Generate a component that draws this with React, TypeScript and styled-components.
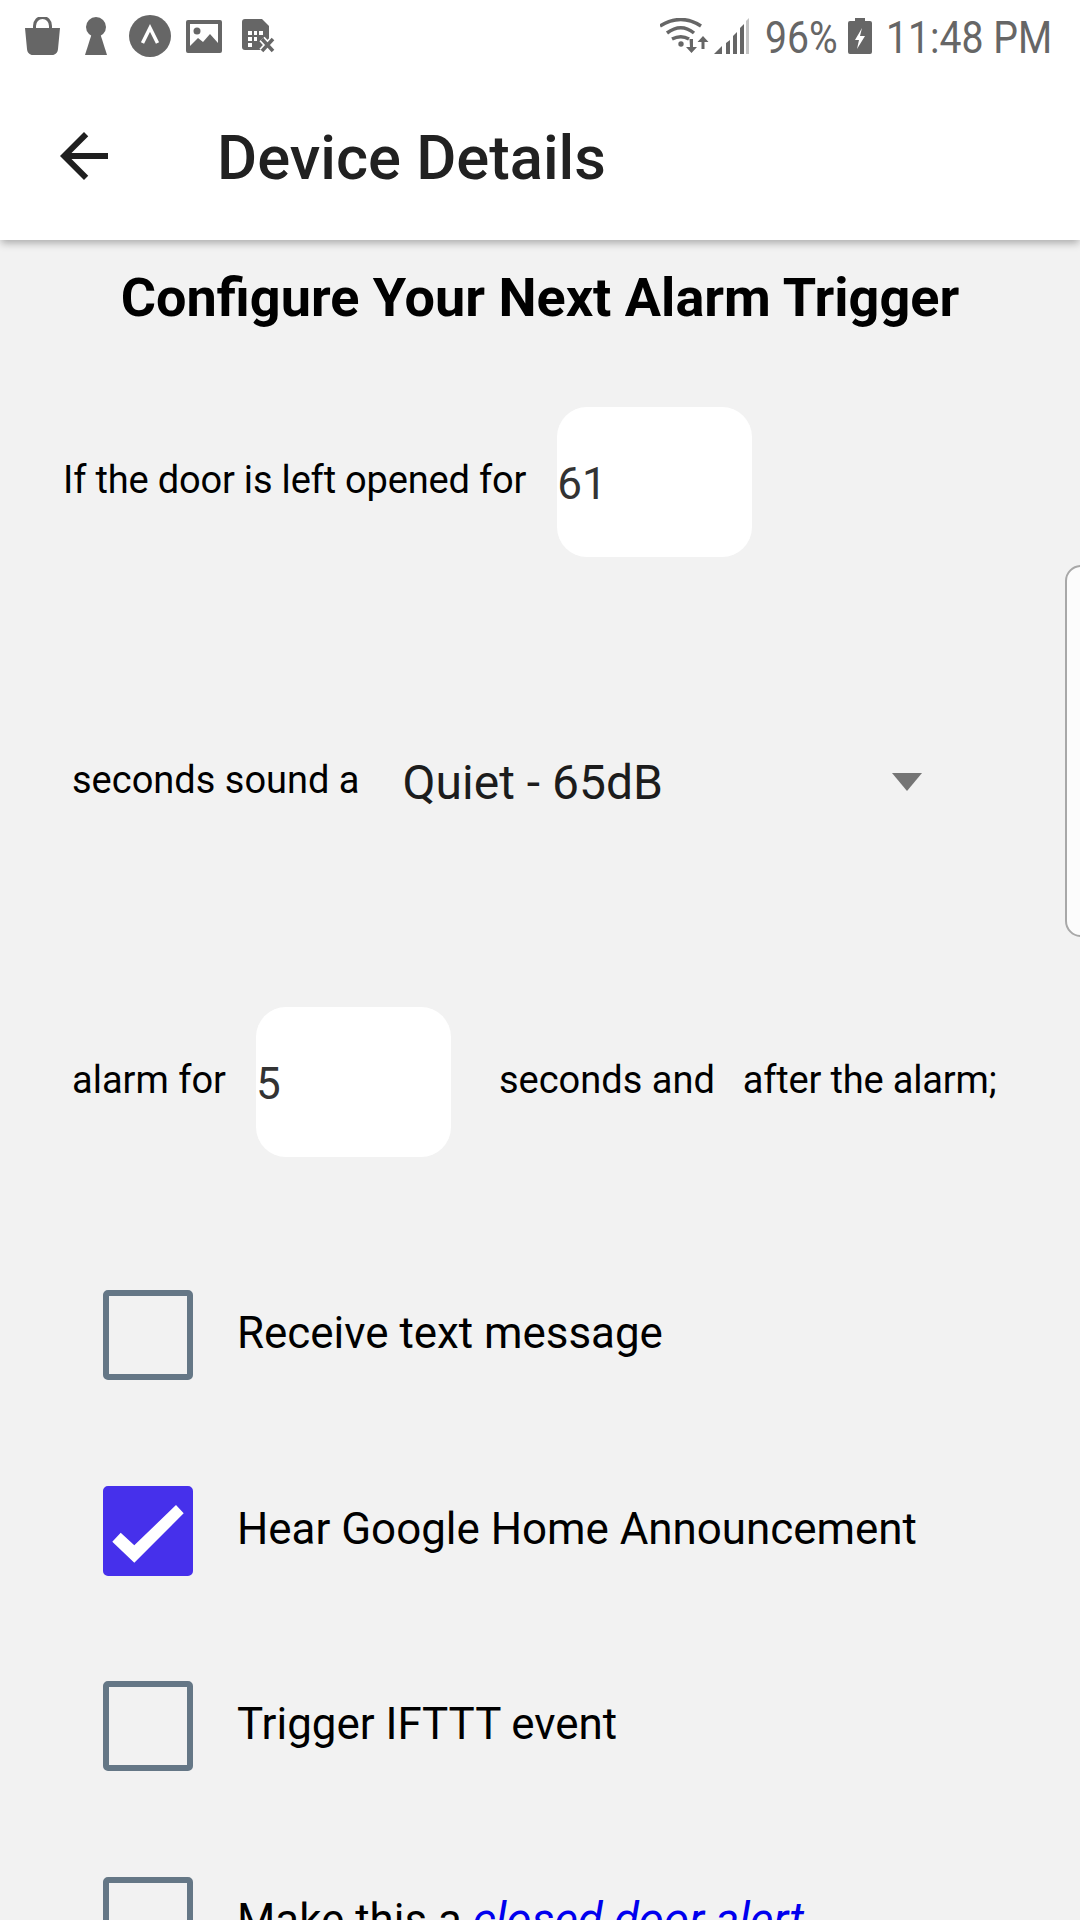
import React from 'react';
import styled, { createGlobalStyle } from 'styled-components';

const GlobalStyle = createGlobalStyle`
  html, body {
    margin: 0;
    padding: 0;
    background: #f2f2f2;
  }
  * {
    box-sizing: border-box;
  }
`;

const Screen = styled.div`
  position: relative;
  width: 1080px;
  height: 1920px;
  overflow: hidden;
  background: #f2f2f2;
  font-family: Roboto, 'Liberation Sans', sans-serif;
  color: #000;
`;

const StatusBar = styled.div`
  position: relative;
  z-index: 2;
  display: flex;
  align-items: center;
  justify-content: space-between;
  height: 72px;
  padding: 0 28px 0 25px;
  background: #fff;
  color: #666;
`;

const StatusGroup = styled.div`
  display: flex;
  align-items: center;
`;

const StatusIcon = styled.svg<{ $gap?: number }>`
  display: block;
  flex: none;
  margin-right: ${(props) => props.$gap ?? 0}px;
  fill: #666;
`;

const StatusText = styled.span<{ $width: number }>`
  display: block;
  width: ${(props) => props.$width}px;
  padding-top: 4px;
  font-size: 44px;
  line-height: 72px;
  white-space: nowrap;
  transform: scaleX(0.89);
  transform-origin: left center;
`;

const Header = styled.header`
  position: relative;
  z-index: 1;
  display: flex;
  align-items: center;
  height: 168px;
  padding-left: 48px;
  background: #fff;
  box-shadow: 0 4px 8px -1px rgba(0, 0, 0, 0.3);
`;

const BackIcon = styled.svg`
  display: block;
  width: 72px;
  height: 72px;
  fill: #1f1f1f;
`;

const HeaderTitle = styled.h1`
  margin: 3px 0 0 97px;
  font-size: 61.500px;
  font-weight: 500;
  color: #212121;
`;

const Content = styled.main`
  display: flex;
  flex-direction: column;
`;

const Heading = styled.h2`
  margin: 28px 0 0;
  height: 139px;
  font-size: 54px;
  line-height: 60px;
  font-weight: 700;
  text-align: center;
`;

const FormRow = styled.div<{ $inset: number }>`
  display: flex;
  align-items: center;
  height: 150px;
  margin-bottom: 150px;
  padding-left: ${(props) => props.$inset}px;
`;

const RowText = styled.span<{ $before?: number; $after?: number; $tight?: boolean }>`
  margin-left: ${(props) => props.$before ?? 0}px;
  margin-right: ${(props) => props.$after ?? 0}px;
  padding-bottom: 4px;
  font-size: 38px;
  letter-spacing: ${(props) => (props.$tight ? '-0.18px' : 'normal')};
  white-space: nowrap;
`;

const NumberInput = styled.input`
  width: 195px;
  height: 150px;
  padding: 3px 0 0;
  border: 0;
  border-radius: 30px;
  background: #fff;
  color: #333;
  font-family: inherit;
  font-size: 44px;
  outline: none;
`;

const Picker = styled.div`
  display: flex;
  align-items: center;
  justify-content: space-between;
  width: 519px;
  margin-left: -2px;
  font-size: 48px;
  color: #1c1c1c;
`;

const PickerCaret = styled.span`
  width: 0;
  height: 0;
  border-left: 15px solid transparent;
  border-right: 15px solid transparent;
  border-top: 18px solid #757575;
`;

const OptionList = styled.div`
  display: flex;
  flex-direction: column;
  gap: 105.600px;
  margin-top: -17px;
  padding-left: 103px;
`;

const Option = styled.label`
  display: flex;
  align-items: center;
  gap: 44px;
  height: 90px;
  font-size: 43.900px;
  white-space: nowrap;
`;

const OptionText = styled.span`
  padding-bottom: 4px;
`;

const CheckBox = styled.span<{ $checked: boolean }>`
  display: flex;
  flex: none;
  width: 90px;
  height: 90px;
  border: 6px solid ${(props) => (props.$checked ? '#4630eb' : '#657786')};
  border-radius: 5px;
  background: ${(props) => (props.$checked ? '#4630eb' : 'transparent')};
`;

const AlertLink = styled.a`
  color: #0000ee;
  font-size: 45.500px;
  font-style: italic;
`;

const SidePanel = styled.div`
  position: absolute;
  top: 565px;
  left: 1065px;
  width: 40px;
  height: 372px;
  border: 2px solid #a8a8a8;
  border-radius: 16px;
  background: #fcfcfc;
`;

const options = [
  { key: 'text', label: 'Receive text message', checked: false },
  { key: 'home', label: 'Hear Google Home Announcement', checked: true },
  { key: 'ifttt', label: 'Trigger IFTTT event', checked: false },
];

const LeftStatusIcons = () => (
  <StatusGroup>
    <StatusIcon width="35" height="38" viewBox="0 0 35 38" $gap={25}>
      <path d="M0 11h35l-2 21c-.3 3.500-2.500 6-6 6H8c-3.500 0-5.700-2.500-6-6z" />
      <path d="M9.500 11V9c0-5 3.500-8.500 8-8.500s8 3.500 8 8.500v2" fill="none" stroke="#666" strokeWidth="3" />
    </StatusIcon>
    <StatusIcon width="22" height="38" viewBox="0 0 22 38" $gap={22}>
      <circle cx="11" cy="10" r="10" />
      <path d="M7 16h8l7 22H0z" />
    </StatusIcon>
    <StatusIcon width="42" height="42" viewBox="0 0 42 42" $gap={15}>
      <circle cx="21" cy="21" r="21" />
      <path d="M13.500 28L21 13l7.500 15" fill="none" stroke="#fff" strokeWidth="3.500" />
    </StatusIcon>
    <StatusIcon width="36" height="33" viewBox="0 0 36 33" $gap={20}>
      <path fillRule="evenodd" d="M2 0h32a2 2 0 0 1 2 2v29a2 2 0 0 1-2 2H2a2 2 0 0 1-2-2V2a2 2 0 0 1 2-2zm2 4v22l8-8 5 4 7-8 8 9V4z" />
      <circle cx="11" cy="11" r="3.500" />
    </StatusIcon>
    <StatusIcon width="33" height="35" viewBox="0 0 33 35">
      <path d="M3 0h17l7 7v24H3a3 3 0 0 1-3-3V3a3 3 0 0 1 3-3z" />
      <path d="M6 12h4v4H6zM6 18h4v4H6zM6 24h4v4H6zM12 12h3v4h-3zM12 18h3v4h-3zM17 12h4v4h-4z" fill="#fff" />
      <path d="M20 20l11 12M31 20L20 32" fill="none" stroke="#fff" strokeWidth="7" />
      <path d="M20 20l11 12M31 20L20 32" fill="none" stroke="#666" strokeWidth="3.500" />
    </StatusIcon>
  </StatusGroup>
);

const RightStatusIcons = () => (
  <StatusGroup>
    <StatusIcon width="49" height="36" viewBox="0 0 49 36" $gap={5}>
      <g fill="none" stroke="#666" strokeWidth="3.500">
        <path d="M0 8Q21-5 41 8" />
        <path d="M7 15Q21 4.400 34 15" />
        <path d="M12 21Q21 16.400 29 21" />
      </g>
      <circle cx="21" cy="26" r="2.700" />
      <path d="M29.500 21H33v8h4l-5.500 6-5.500-6h4zM41.500 31v-7h-4l5.500-6 5.500 6h-4v7z" />
    </StatusIcon>
    <StatusIcon width="36" height="36" viewBox="0 0 36 36" $gap={15}>
      <path d="M0 36l8-8v8zM12 36V25l4-3v14zM19 36V18l4-4v22zM26 36V10l4-4v30z" />
      <path d="M32 36V3l3-3v36z" fill="#c4c4c4" />
    </StatusIcon>
    <StatusText $width={83}>96%</StatusText>
    <StatusIcon width="24" height="36" viewBox="0 0 24 36" $gap={14}>
      <path fillRule="evenodd" d="M7 0h10v3h5a2 2 0 0 1 2 2v29a2 2 0 0 1-2 2H2a2 2 0 0 1-2-2V5a2 2 0 0 1 2-2h5zm7 10l-7 12h4l-2 9 8-13h-5z" />
    </StatusIcon>
    <StatusText $width={166}>11:48 PM</StatusText>
  </StatusGroup>
);

export default function App() {
  return (
    <Screen>
      <GlobalStyle />
      <StatusBar>
        <LeftStatusIcons />
        <RightStatusIcons />
      </StatusBar>
      <Header>
        <BackIcon viewBox="0 0 24 24">
          <path d="M20 11H7.830l5.590-5.590L12 4l-8 8 8 8 1.410-1.410L7.830 13H20v-2z" />
        </BackIcon>
        <HeaderTitle>Device Details</HeaderTitle>
      </Header>
      <Content>
        <Heading>Configure Your Next Alarm Trigger</Heading>
        <FormRow $inset={63}>
          <RowText $after={31} $tight>If the door is left opened for</RowText>
          <NumberInput defaultValue="61" />
        </FormRow>
        <FormRow $inset={72}>
          <RowText $after={45}>seconds sound a</RowText>
          <Picker>
            Quiet - 65dB
            <PickerCaret />
          </Picker>
        </FormRow>
        <FormRow $inset={72}>
          <RowText $after={30}>alarm for</RowText>
          <NumberInput defaultValue="5" />
          <RowText $before={48} $after={28}>seconds and</RowText>
          <RowText $tight>after the alarm;</RowText>
        </FormRow>
        <OptionList>
          {options.map((option) => (
            <Option key={option.key}>
              <CheckBox $checked={option.checked}>
                {option.checked && (
                  <svg width="78" height="78" viewBox="6 6 78 78">
                    <polygon points="9.300,55.700 17.700,46.700 31.300,59.300 73,19 80.700,27.300 31.300,76.700" fill="#fff" />
                  </svg>
                )}
              </CheckBox>
              <OptionText>{option.label}</OptionText>
            </Option>
          ))}
          <Option>
            <CheckBox $checked={false} />
            <OptionText>
              Make this a <AlertLink>closed door alert</AlertLink>
            </OptionText>
          </Option>
        </OptionList>
      </Content>
      <SidePanel />
    </Screen>
  );
}
